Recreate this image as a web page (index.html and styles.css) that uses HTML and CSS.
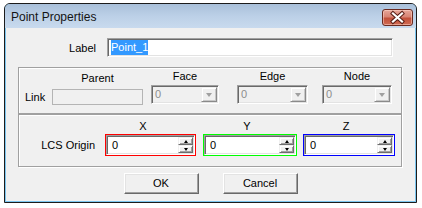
FILE: index.html
```html
<!DOCTYPE html>
<html>
<head>
<meta charset="utf-8">
<link rel="stylesheet" href="styles.css">
</head>
<body>
<div class="window">
  <div class="titlebar">
    <span class="title">Point Properties</span>
    <div class="close">
      <svg width="29" height="15" viewBox="0 0 29 15">
        <path d="M10 3.5 L19 11.5 M19 3.5 L10 11.5" stroke="#5a2018" stroke-width="4.2" stroke-linecap="square" fill="none"/>
        <path d="M10 3.5 L19 11.5 M19 3.5 L10 11.5" stroke="#ffffff" stroke-width="2.2" stroke-linecap="square" fill="none"/>
      </svg>
    </div>
  </div>
  <div class="client">
    <div class="label-row">
      <span class="field-label">Label</span>
      <div class="textbox sunken"><span class="sel">Point_1</span></div>
    </div>

    <div class="group link-group">
      <span class="link-label">Link</span>
      <div class="col col-parent">
        <span class="cap cap-parent">Parent</span>
        <div class="flatbox"></div>
      </div>
      <div class="col col-face">
        <span class="cap">Face</span>
        <div class="combo sunken"><span class="cval">0</span><span class="drop"><span class="darrow"></span></span></div>
      </div>
      <div class="col col-edge">
        <span class="cap">Edge</span>
        <div class="combo sunken"><span class="cval">0</span><span class="drop"><span class="darrow"></span></span></div>
      </div>
      <div class="col col-node">
        <span class="cap">Node</span>
        <div class="combo sunken"><span class="cval">0</span><span class="drop"><span class="darrow"></span></span></div>
      </div>
    </div>

    <div class="group origin-group">
      <span class="origin-label">LCS Origin</span>
      <div class="axis axis-x">
        <span class="axis-cap">X</span>
        <div class="spin spin-red">
          <div class="spin-inner sunken"><span class="sval">0</span>
            <div class="spinner"><span class="sbtn"><span class="up"></span></span><span class="sbtn"><span class="down"></span></span></div>
          </div>
        </div>
      </div>
      <div class="axis axis-y">
        <span class="axis-cap">Y</span>
        <div class="spin spin-green">
          <div class="spin-inner sunken"><span class="sval">0</span>
            <div class="spinner"><span class="sbtn"><span class="up"></span></span><span class="sbtn"><span class="down"></span></span></div>
          </div>
        </div>
      </div>
      <div class="axis axis-z">
        <span class="axis-cap">Z</span>
        <div class="spin spin-blue">
          <div class="spin-inner sunken"><span class="sval">0</span>
            <div class="spinner"><span class="sbtn"><span class="up"></span></span><span class="sbtn"><span class="down"></span></span></div>
          </div>
        </div>
      </div>
    </div>

    <div class="buttons">
      <div class="btn">OK</div>
      <div class="btn">Cancel</div>
    </div>
  </div>
</div>
</body>
</html>
```

FILE: styles.css
```css
* { box-sizing: border-box; }

body {
  margin: 0;
  background: #ffffff;
  font-family: "Liberation Sans", Arial, sans-serif;
  font-size: 11px;
  color: #000;
}

.window {
  margin: 3px 0 0 4px;
  width: 413px;
  height: 200px;
  border: 1px solid #1c1c1c;
  border-radius: 6px 6px 0 0;
  background: #7cc6ef;
  padding: 0 1px 1px 1px;
  display: flex;
  flex-direction: column;
  overflow: hidden;
}

.titlebar {
  height: 24px;
  margin: 0 -1px;
  background: linear-gradient(#a9c0da, #bcd0e7 50%, #c8daee);
  display: flex;
  justify-content: space-between;
  align-items: flex-start;
  padding-left: 6px;
}

.title {
  font-size: 12px;
  line-height: 24px;
  padding-top: 1px;
  color: #141414;
}

.close {
  width: 31px;
  height: 17px;
  margin-top: 5px;
  margin-right: 3px;
  border: 1px solid #6a2a20;
  border-radius: 3px;
  background: linear-gradient(#e7a699, #d88474 45%, #c2503b 55%, #cf6a52);
  box-shadow: inset 0 0 0 1px rgba(255, 220, 210, 0.5);
  display: flex;
  align-items: center;
  justify-content: center;
}

.close svg { display: block; }

.client {
  flex: 1;
  background: #f0f0f0;
  padding: 10px 0 0 12px;
  display: flex;
  flex-direction: column;
}

.label-row {
  display: flex;
  align-items: center;
  height: 19px;
}

.field-label {
  width: 78px;
  text-align: right;
  margin-right: 11px;
}

.sunken {
  border: 1px solid;
  border-color: #a0a0a0 #ffffff #ffffff #a0a0a0;
  box-shadow: inset 1px 1px 0 #696969, inset -1px -1px 0 #e3e3e3;
  padding: 1px;
}

.textbox {
  width: 286px;
  height: 19px;
  background: #fff;
}

.sel {
  display: inline-block;
  margin-left: 2px;
  line-height: 15px;
  height: 15px;
  background: #3399ff;
  color: #fff;
}

.group {
  width: 384px;
  border: 1px solid #a0a0a0;
  box-shadow: inset 1px 1px 0 #fff, 1px 1px 0 #fff;
  display: flex;
}

.link-group {
  margin-top: 10px;
  height: 47px;
  padding: 2px 0 0 6px;
  align-items: flex-start;
}

.link-label {
  width: 27px;
  margin-top: 19px;
  line-height: 16px;
}

.col {
  display: flex;
  flex-direction: column;
  align-items: center;
}

.cap {
  line-height: 13px;
  margin-bottom: 2px;
}

.cap-parent {
  margin-top: 2px;
  margin-bottom: 4px;
}

.col-parent { width: 91px; }
.col-face { width: 68px; margin-left: 8px; }
.col-edge { width: 71px; margin-left: 18px; }
.col-node { width: 70px; margin-left: 14px; }

.flatbox {
  width: 100%;
  height: 16px;
  border: 1px solid #b4b4b4;
  background: #f0f0f0;
}

.combo {
  width: 100%;
  height: 19px;
  background: #f0f0f0;
  display: flex;
  align-items: center;
}

.cval {
  padding-left: 2px;
  color: #8d8d8d;
  line-height: 15px;
}

.drop {
  margin-left: auto;
  width: 16px;
  height: 15px;
  border: 1px solid;
  border-color: #f0f0f0 #8a8a8a #8a8a8a #f0f0f0;
  box-shadow: inset 1px 1px 0 #fff, inset -1px -1px 0 #c8c8c8;
  background: #f0f0f0;
  display: flex;
  align-items: center;
  justify-content: center;
}

.darrow {
  width: 0;
  height: 0;
  border-left: 3.5px solid transparent;
  border-right: 3.5px solid transparent;
  border-top: 4px solid #a0a0a0;
  margin-top: 1px;
}

.origin-group {
  height: 53px;
  padding-top: 5px;
  align-items: flex-start;
}

.origin-label {
  width: 76px;
  margin-right: 10px;
  margin-top: 14px;
  text-align: right;
  line-height: 22px;
}

.axis {
  display: flex;
  flex-direction: column;
}

.axis-x { width: 91px; margin-right: 7px; }
.axis-y { width: 94px; margin-right: 6px; }
.axis-z { width: 92px; }

.axis-cap {
  line-height: 13px;
  margin-bottom: 1px;
  text-align: center;
  padding-right: 6px;
}

.axis-x .axis-cap { padding-right: 15px; }

.spin {
  height: 22px;
  border: 1px solid;
}

.spin-red { border-color: #ff0000; }
.spin-green { border-color: #00ff00; }
.spin-blue { border-color: #0000ff; }

.spin-inner {
  height: 20px;
  background: #fff;
  display: flex;
  align-items: center;
}

.sval {
  padding-left: 4px;
  line-height: 16px;
}

.spinner {
  margin-left: auto;
  width: 15px;
  height: 16px;
  display: flex;
  flex-direction: column;
}

.sbtn {
  height: 8px;
  border: 1px solid;
  border-color: #f0f0f0 #6d6d6d #6d6d6d #f0f0f0;
  box-shadow: inset 1px 1px 0 #fff, inset -1px -1px 0 #a0a0a0;
  background: #f0f0f0;
  display: flex;
  align-items: center;
  justify-content: center;
}

.up {
  width: 0;
  height: 0;
  border-left: 2.5px solid transparent;
  border-right: 2.5px solid transparent;
  border-bottom: 3px solid #000;
}

.down {
  width: 0;
  height: 0;
  border-left: 2.5px solid transparent;
  border-right: 2.5px solid transparent;
  border-top: 3px solid #000;
}

.buttons {
  margin-top: 6px;
  margin-left: -12px;
  display: flex;
  justify-content: center;
  gap: 24px;
}

.btn {
  width: 75px;
  height: 21px;
  border: 1px solid;
  border-color: #ffffff #696969 #696969 #ffffff;
  box-shadow: inset -1px -1px 0 #a0a0a0, inset 1px 1px 0 #e3e3e3;
  background: #f0f0f0;
  display: flex;
  align-items: center;
  justify-content: center;
  line-height: 13px;
}
```
